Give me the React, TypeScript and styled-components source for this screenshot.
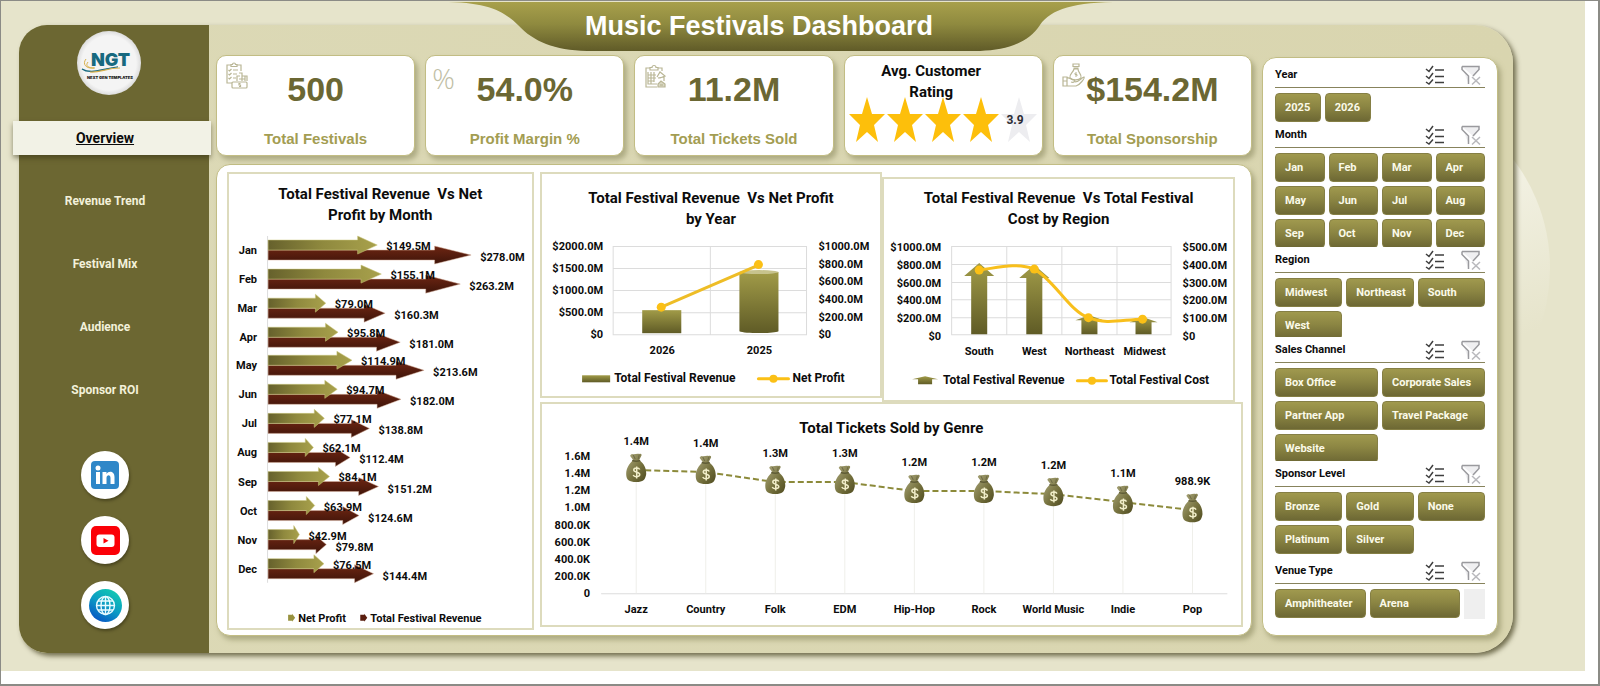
import React from "react";
import styled, { createGlobalStyle, css } from "styled-components";

const GlobalStyle = createGlobalStyle`
  *, *::before, *::after { box-sizing: border-box; }
  body { margin: 0; background: #ffffff; font-family: Roboto, "Liberation Sans", sans-serif; color: #0c0c0c; }
  h1, h2, p, ul { margin: 0; padding: 0; }
  ul { list-style: none; }
  button { font: inherit; }
`;

/* ---------- page frame ---------- */

const Page = styled.div`
  min-height: 100vh;
  border: 2px solid #8b8b86;
  border-width: 1px 2px 2px 1px;
  padding: 0 13px 13px 0;
  display: flex;
`;

const Canvas = styled.div`
  flex: 1;
  min-width: 0;
  position: relative;
  overflow: hidden;
  isolation: isolate;
  padding: 0 72px 18px 18px;
  background: #e6e4cb;
`;

const Glow = styled.div`
  position: absolute;
  z-index: -1;
  top: 88px;
  right: 35px;
  width: 358px;
  height: 358px;
  border-radius: 50%;
  background: linear-gradient(160deg, #f6f5ea 30%, #e6e4cb 75%);
`;

const Header = styled.header`
  position: relative;
  z-index: 1;
  display: flex;
  justify-content: center;
  margin-left: 32px;
`;

const Banner = styled.div`
  position: relative;
  width: 680px;
  height: 50px;
  padding-right: 46px;
  display: flex;
  align-items: center;
  justify-content: center;
  svg { position: absolute; inset: 0; width: 100%; height: 100%; }
`;

const Title = styled.h1`
  position: relative;
  font: 700 27px/50px "Liberation Sans", Arial, sans-serif;
  color: #ffffff;
  white-space: nowrap;
`;

const Board = styled.div`
  margin-top: -26px;
  border-radius: 28px 38px 38px 28px;
  background: linear-gradient(90deg, #dcd9b6, #d9d5af);
  box-shadow: 3px 3px 5px rgba(74, 70, 36, 0.75);
  display: grid;
  grid-template-columns: 190px minmax(0, 1fr) 236px;
  column-gap: 7px;
  padding-right: 15px;
`;

/* ---------- sidebar ---------- */

const Sidebar = styled.aside`
  background: #6c6732;
  border-radius: 28px 0 0 28px;
  padding: 6px 18px 0 0;
  display: flex;
  flex-direction: column;
  align-items: center;
`;

const LogoDisc = styled.div`
  width: 64px;
  height: 64px;
  margin-left: 8px;
  border-radius: 50%;
  background: radial-gradient(circle, #f4f4f4 60%, #dedede 70%);
  svg { display: block; width: 64px; height: 64px; }
`;

const Nav = styled.nav`
  align-self: stretch;
  display: flex;
  flex-direction: column;
  gap: 29px;
  margin-top: 26px;
`;

const NavLink = styled.a<{ $active?: boolean }>`
  height: 34px;
  display: flex;
  align-items: center;
  justify-content: center;
  color: #f3f1da;
  font-size: 12px;
  font-weight: 700;
  text-decoration: none;
  ${(p) =>
    p.$active &&
    css`
      margin: 0 -20px 0 -6px;
      padding-right: 14px;
      background: #f2f2e6;
      color: #0c0c0c;
      font-size: 14px;
      text-decoration: underline;
      box-shadow: 0 3px 5px rgba(50, 46, 18, 0.5);
    `}
`;

const Socials = styled.div`
  display: flex;
  flex-direction: column;
  gap: 17px;
  margin-top: 44px;
`;

const SocialLink = styled.a`
  width: 48px;
  height: 48px;
  border-radius: 50%;
  background: #ffffff;
  box-shadow: 1px 2px 3px rgba(40, 36, 12, 0.5);
  display: flex;
  align-items: center;
  justify-content: center;
`;

/* ---------- figures ---------- */

const Main = styled.main`
  padding: 30px 3px 17px 0;
  display: flex;
  flex-direction: column;
  gap: 8px;
`;

const KpiRow = styled.section`
  display: grid;
  grid-template-columns: repeat(5, minmax(0, 1fr));
  gap: 10px;
`;

const panel = css`
  background: #ffffff;
  border: 1px solid #c2bd84;
  box-shadow: 3px 4px 5px rgba(130, 128, 84, 0.5);
`;

const KpiCard = styled.article`
  ${panel}
  position: relative;
  height: 101px;
  border-radius: 10px;
  display: flex;
  flex-direction: column;
  align-items: center;
`;

const KpiIcon = styled.svg`
  position: absolute;
  left: 8px;
  top: 6px;
  width: 24px;
  height: 28px;
`;

const PercentMark = styled.span`
  position: absolute;
  left: 6px;
  top: 8px;
  font: 300 28px/28px "Open Sans", sans-serif;
  color: #c0bea4;
`;

const KpiValue = styled.p`
  margin-top: 13px;
  font: 700 34px/40px "Liberation Sans", Arial, sans-serif;
  color: #6b6733;
`;

const KpiLabel = styled.p`
  margin-top: 20px;
  font: 700 15px/20px "Liberation Sans", Arial, sans-serif;
  color: #a39d52;
  white-space: nowrap;
`;

const RatingTitle = styled.h2`
  position: relative;
  z-index: 1;
  margin-top: 5px;
  margin-right: 24px;
  width: 110px;
  font-size: 15px;
  line-height: 21px;
  font-weight: 700;
  text-align: center;
`;

const Stars = styled.svg`
  width: 190px;
  height: 48px;
  margin-top: -7px;
  flex: none;
`;

/* ---------- charts ---------- */

const ChartPanel = styled.section`
  ${panel}
  flex: 1;
  border-radius: 14px;
  padding: 7px 8px 5px 10px;
  display: grid;
  grid-template-columns: minmax(0, 306fr) minmax(0, 702fr);
  gap: 6px;
  align-items: start;
`;

const RightCharts = styled.div`
  display: flex;
  flex-direction: column;
`;

const TopCharts = styled.div`
  display: grid;
  grid-template-columns: minmax(0, 342fr) minmax(0, 352fr);
  padding-right: 8px;
  align-items: start;
`;

const ChartCard = styled.figure<{ $top: number; $drop?: number }>`
  margin: ${(p) => p.$drop ?? 0}px 0 0;
  border: 2px solid #dddbbd;
  background: #ffffff;
  padding-top: ${(p) => p.$top}px;
`;

const ChartTitle = styled.figcaption<{ $width?: number }>`
  max-width: ${(p) => (p.$width ? p.$width + "px" : "none")};
  margin: 0 auto;
  font-size: 15px;
  line-height: 21px;
  font-weight: 700;
  text-align: center;
`;

const ChartSvg = styled.svg`
  display: block;
  width: 100%;
  height: auto;
  overflow: visible;
  text {
    font-family: Roboto, "Liberation Sans", sans-serif;
    font-size: 11px;
    font-weight: 700;
    fill: #0c0c0c;
  }
  .key { font-size: 12px; }
  .grid { stroke: #dcdcdc; fill: none; }
`;

/* ---------- filters ---------- */

const Filters = styled.aside`
  ${panel}
  margin: 32px 0 17px;
  border-radius: 14px;
  padding: 4px 12px 12px;
`;

const Slicer = styled.section``;

const SlicerHead = styled.div`
  height: 26px;
  border-bottom: 1px solid #87835c;
  display: flex;
  align-items: center;
  padding-right: 4px;
`;

const SlicerTitle = styled.h2`
  flex: 1;
  font-size: 11px;
  line-height: 24px;
  font-weight: 700;
`;

const IconButton = styled.button`
  border: 0;
  background: none;
  padding: 0;
  margin-left: 16px;
  width: 20px;
  height: 20px;
  svg { display: block; width: 20px; height: 20px; }
`;

const Options = styled.div<{ $cols: number; $height: number; $inset: number }>`
  margin-top: 5px;
  height: ${(p) => p.$height}px;
  padding-right: ${(p) => p.$inset}px;
  overflow: hidden;
  display: grid;
  grid-template-columns: repeat(${(p) => p.$cols}, minmax(0, 1fr));
  grid-auto-rows: 29px;
  gap: 4px;
  position: relative;
`;

const Option = styled.button`
  border: 1px solid #857f45;
  border-radius: 4px;
  background: linear-gradient(180deg, #a0994e 0%, #8c8643 45%, #6d6834 100%);
  color: #fbfae9;
  font-size: 11px;
  font-weight: 700;
  text-align: left;
  padding: 0 0 0 9px;
  white-space: nowrap;
`;

const Thumb = styled.span`
  position: absolute;
  right: 0;
  top: 0;
  width: 21px;
  height: 30px;
  background: #efefef;
`;

/* ---------- data ---------- */

const months: [string, number, number][] = [
  ["Jan", 149.5, 278.0],
  ["Feb", 155.1, 263.2],
  ["Mar", 79.0, 160.3],
  ["Apr", 95.8, 181.0],
  ["May", 114.9, 213.6],
  ["Jun", 94.7, 182.0],
  ["Jul", 77.1, 138.8],
  ["Aug", 62.1, 112.4],
  ["Sep", 84.1, 151.2],
  ["Oct", 63.9, 124.6],
  ["Nov", 42.9, 79.8],
  ["Dec", 76.5, 144.4],
];

const genres: [string, string, number][] = [
  ["Jazz", "1.4M", 31],
  ["Country", "1.4M", 33],
  ["Folk", "1.3M", 43],
  ["EDM", "1.3M", 43],
  ["Hip-Hop", "1.2M", 52],
  ["Rock", "1.2M", 52],
  ["World Music", "1.2M", 55],
  ["Indie", "1.1M", 63],
  ["Pop", "988.9K", 71],
];

const slicers = [
  { title: "Year", cols: 4, height: 29, inset: 15, options: ["2025", "2026"] },
  {
    title: "Month", cols: 4, height: 94, inset: 0,
    options: ["Jan", "Feb", "Mar", "Apr", "May", "Jun", "Jul", "Aug", "Sep", "Oct", "Nov", "Dec"],
  },
  { title: "Region", cols: 3, height: 59, inset: 0, options: ["Midwest", "Northeast", "South", "West"] },
  {
    title: "Sales Channel", cols: 2, height: 93, inset: 0,
    options: ["Box Office", "Corporate Sales", "Partner App", "Travel Package", "Website"],
  },
  { title: "Sponsor Level", cols: 3, height: 66, inset: 0, options: ["Bronze", "Gold", "None", "Platinum", "Silver"] },
  { title: "Venue Type", cols: 2, height: 30, inset: 25, options: ["Amphitheater", "Arena"] },
];

const navItems = ["Overview", "Revenue Trend", "Festival Mix", "Audience", "Sponsor ROI"];

/* ---------- icons ---------- */

const iconLine = { fill: "none", stroke: "#b9b695", strokeWidth: 1.2 };

const FestivalIcon = () => (
  <KpiIcon viewBox="0 0 24 28" {...iconLine} aria-hidden="true">
    <path d="M6 3H2v18h5M12 3h4v6M6 4.500V2.500h1.500a1.500 1.500 0 0 1 3 0H12v2z" />
    <path d="M3.500 8l1 1 2-2M8 8h5M3.500 12l1 1 2-2M8 12h4M3.500 16l1 1 2-2M8 16h3" />
    <path d="M14 11h3v3h5v5M12 19v-5h3M14 17h6M17 14v5M20 14v5" />
    <rect x="7" y="20" width="15" height="6" rx="1" />
    <path d="M15.500 21.500h-1.500v1.500h1.500v1.500h-1.500" />
  </KpiIcon>
);

const TicketIcon = () => (
  <KpiIcon viewBox="0 0 24 28" {...iconLine} aria-hidden="true">
    <path d="M7 6H3v19h11M15 6h4v3M7 8V5.500h2a2 2 0 0 1 4 0h2V8z" />
    <path d="M5 10v12h9M5 13h8M5 16h8M5 19h6M8 10v12M11 10v10" />
    <path d="M14 15l3-5 5 4-5 2M15 16l6-1v4" />
    <path d="M15 25v-3l3-3 4 3v3z" fill="#d9d7c2" />
    <path d="M17 23h3" />
  </KpiIcon>
);

const SponsorIcon = () => (
  <KpiIcon viewBox="0 0 24 28" {...iconLine} aria-hidden="true">
    <path d="M11 2h6v2.500h-6zM11.500 6h5M12 7c-1 4-5 5-4 9 2 2 8 3 11 0 1-4-3-5-3-9z" />
    <path d="M15 11h-2v1.500h2v1.500h-2" strokeWidth="1" />
    <path d="M1 15h4v9H1zM1 19h4M5 16c3-1 4 2 7 2 2 1 0 3-3 2M13 20c4 0 6-4 9-5 1 1-4 8-8 9H5" />
  </KpiIcon>
);

const MultiSelectIcon = () => (
  <svg viewBox="0 0 20 20" fill="none" stroke="#3f3f3f" strokeWidth="1.500" aria-hidden="true">
    <path d="M1 4l3 2.500L8 1M1 11l3 2.500L8 8M1 17l3 2L8 14.500M10 5h9M10 11.500h9M10 17.500h9" />
  </svg>
);

const ClearIcon = () => (
  <svg viewBox="0 0 20 20" fill="none" aria-hidden="true">
    <path d="M1 1.500h17v3L12 11M7.500 19v-8L1 4.500v-3" fill="#efeff1" stroke="#9a9a9e" strokeWidth="1.500" />
    <path d="M11 12l8 7.500M19 12l-8 7.500" stroke="#b9b9bd" strokeWidth="1.500" />
  </svg>
);

const Logo = () => (
  <svg viewBox="0 0 64 64" role="img" aria-label="NGT">
    <g fill="none">
      <path d="M9 28c-4 5 0 10 8 9M11 31c-3 4 0 6 7 6" stroke="#d8b04c" strokeWidth="1" />
      <path d="M5 38c8 6 22-1 36-2-12 1-26 8-36 2z" stroke="#17697f" fill="#17697f" strokeWidth="1.200" />
      <path d="M13 41c10 1 16-4 30-4" stroke="#d8b04c" strokeWidth="1.200" />
    </g>
    <text x="14" y="35" fontFamily="Inter, sans-serif" fontWeight="900" fontSize="18" fill="#17697f">NGT</text>
    <text x="33" y="48" textAnchor="middle" fontFamily="Inter, sans-serif" fontWeight="900" fontSize="4" fill="#222222">
      NEXT GEN TEMPLATES
    </text>
  </svg>
);

const LinkedInIcon = () => (
  <svg width="28" height="28" viewBox="0 0 28 28" aria-hidden="true">
    <rect width="28" height="28" rx="4" fill="#2f87c8" />
    <circle cx="7" cy="7" r="2.500" fill="#fff" />
    <path d="M5 11h4v12H5zM11.500 11h4v2c2-3.500 8-3 8 3v7h-4v-6c0-4-4-3.500-4 0v6h-4z" fill="#fff" />
  </svg>
);

const YouTubeIcon = () => (
  <svg width="29" height="29" viewBox="0 0 29 29" aria-hidden="true">
    <rect width="29" height="29" rx="5" fill="#fb0007" />
    <rect x="5.500" y="8.500" width="18" height="12.500" rx="3" fill="#fff" />
    <path d="M12.500 12v5.500l5-2.750z" fill="#fb0007" />
  </svg>
);

const GlobeIcon = () => (
  <svg width="33" height="33" viewBox="0 0 33 33" aria-hidden="true">
    <defs>
      <linearGradient id="globe" x1="0.800" y1="0" x2="0.200" y2="1">
        <stop offset="0" stopColor="#12cdb0" />
        <stop offset="0.500" stopColor="#0b9bc4" />
        <stop offset="1" stopColor="#0750c4" />
      </linearGradient>
    </defs>
    <circle cx="16.500" cy="16.500" r="16.500" fill="url(#globe)" />
    <g fill="none" stroke="#e8fbff" strokeWidth="1.400">
      <circle cx="16.500" cy="16.500" r="9" />
      <ellipse cx="16.500" cy="16.500" rx="4.500" ry="9" />
      <path d="M16.500 7.500v18M7.500 16.500h18M9 12h15M9 21h15" />
    </g>
  </svg>
);

/* ---------- charts ---------- */

const rightArrow = (y: number, length: number) => {
  const neck = 39 + length * 0.82;
  const tip = 39 + length;
  return `M39 ${y - 5}H${neck}V${y - 9}L${tip} ${y}L${neck} ${y + 9}V${y + 5}H39z`;
};

const upArrow = (x: number, top: number, neck: number, bottom: number, half: number) =>
  `M${x} ${top}L${x + half} ${neck}H${x + 8}V${bottom}H${x - 8}V${neck}H${x - half}z`;

const MonthChart = () => (
  <ChartCard $top={10}>
    <ChartTitle $width={220}>Total Festival Revenue &nbsp;Vs Net Profit by Month</ChartTitle>
    <ChartSvg viewBox="0 0 302 401">
      <defs>
        <linearGradient id="profit">
          <stop offset="0" stopColor="#66612c" />
          <stop offset="0.500" stopColor="#8f893e" />
          <stop offset="1" stopColor="#a8a14c" />
        </linearGradient>
        <linearGradient id="revenue" x1="0" y1="0" x2="0" y2="1">
          <stop offset="0" stopColor="#6e2613" />
          <stop offset="1" stopColor="#3e1409" />
        </linearGradient>
      </defs>
      <path d="M38.500 10v346" className="grid" />
      {months.map(([name, profit, revenue], i) => {
        const y = Math.round(19 + i * 28.87);
        return (
          <g key={name}>
            <path d={rightArrow(y + 10, revenue * 0.729)} fill="url(#revenue)" stroke="#d9b5a0" strokeWidth="0.500" />
            <path d={rightArrow(y, profit * 0.729)} fill="url(#profit)" stroke="#cdc87e" strokeWidth="0.500" />
            <text x="28" y={y + 9} textAnchor="end">{name}</text>
            <text x={48 + profit * 0.729} y={y + 5}>${profit.toFixed(1)}M</text>
            <text x={48 + revenue * 0.729} y={y + 16}>${revenue.toFixed(1)}M</text>
          </g>
        );
      })}
      <path d="M59 388h4v-1l3 4-3 4v-1h-4z" fill="#98923f" />
      <text x="69" y="395">Net Profit</text>
      <path d="M131 388h4v-1l3 4-3 4v-1h-4z" fill="#5a1e0f" />
      <text x="141" y="395">Total Festival Revenue</text>
    </ChartSvg>
  </ChartCard>
);

const oliveFill = (
  <linearGradient id="olive" x1="0" y1="0" x2="0" y2="1">
    <stop offset="0" stopColor="#a19b48" />
    <stop offset="1" stopColor="#5f5b26" />
  </linearGradient>
);

const YearChart = () => (
  <ChartCard $top={14}>
    <ChartTitle $width={256}>Total Festival Revenue &nbsp;Vs Net Profit by&nbsp;Year</ChartTitle>
    <ChartSvg viewBox="0 0 338 166">
      <defs>{oliveFill}</defs>
      <path d="M71 16.500h193v88H71zM71 38.500h193M71 60.500h193M71 82.500h193M168 16.500v88" className="grid" />
      {["$2000.0M", "$1500.0M", "$1000.0M", "$500.0M", "$0"].map((t, i) => (
        <text key={t} x="61" y={20 + i * 22} textAnchor="end">{t}</text>
      ))}
      {["$1000.0M", "$800.0M", "$600.0M", "$400.0M", "$200.0M", "$0"].map((t, i) => (
        <text key={t} x="276" y={20 + i * 17.6}>{t}</text>
      ))}
      <rect x="100" y="80" width="39" height="23" fill="url(#olive)" />
      <path d="M197 42v59c5 2.500 34 2.500 39 0V42z" fill="url(#olive)" />
      <ellipse cx="216.500" cy="42" rx="19.500" ry="2" fill="#c7c38d" />
      <path d="M119 77L216 35" stroke="#eebd26" strokeWidth="3" />
      <circle cx="119" cy="77" r="4.500" fill="#fbc016" />
      <circle cx="216" cy="34.500" r="4.500" fill="#fbc016" />
      <text x="120" y="124" textAnchor="middle">2026</text>
      <text x="217" y="124" textAnchor="middle">2025</text>
      <rect x="40" y="145" width="28" height="7" fill="url(#olive)" />
      <text x="72" y="152" className="key">Total Festival Revenue</text>
      <path d="M216 148.500h30" stroke="#fbc016" strokeWidth="3" strokeLinecap="round" />
      <circle cx="231" cy="148.500" r="4" fill="#fbc016" />
      <text x="250" y="152" className="key">Net Profit</text>
    </ChartSvg>
  </ChartCard>
);

const RegionChart = () => (
  <ChartCard $top={9} $drop={5}>
    <ChartTitle $width={280}>Total Festival Revenue &nbsp;Vs Total Festival Cost by Region</ChartTitle>
    <ChartSvg viewBox="0 0 348 170">
      <path
        d="M67.500 16.500h219v88h-219zM67.500 34.500h219M67.500 52.500h219M67.500 69.500h219M67.500 87.500h219M122.500 16.500v88M177.500 16.500v88M232.500 16.500v88"
        className="grid"
      />
      {["$1000.0M", "$800.0M", "$600.0M", "$400.0M", "$200.0M", "$0"].map((t, i) => (
        <text key={t} x="57" y={21 + i * 17.7} textAnchor="end">{t}</text>
      ))}
      {["$500.0M", "$400.0M", "$300.0M", "$200.0M", "$100.0M", "$0"].map((t, i) => (
        <text key={t} x="298" y={21 + i * 17.7}>{t}</text>
      ))}
      <g fill="url(#olive)">
        <path d={upArrow(95, 33, 46, 104, 15)} />
        <path d={upArrow(150, 35, 48, 104, 15)} />
        <path d={upArrow(205, 85, 90, 104, 14)} />
        <path d={upArrow(259, 87, 92, 104, 14)} />
        <path d="M41 146l13 3h-6v5H34v-5h-6z" />
      </g>
      <path d="M95 40C112 38 132 32 150 39C170 50 185 81 204 87.500C222 95 240 89 258 89" fill="none" stroke="#f8bf1c" strokeWidth="3" />
      {[[95, 40], [150, 39], [204, 87.5], [258, 89]].map(([x, y]) => (
        <circle key={x} cx={x} cy={y} r="4.500" fill="#fbc016" />
      ))}
      {["South", "West", "Northeast", "Midwest"].map((t, i) => (
        <text key={t} x={95 + i * 55} y="125" textAnchor="middle">{t}</text>
      ))}
      <text x="59" y="154" className="key">Total Festival Revenue</text>
      <path d="M193 150.500h29" stroke="#fbc016" strokeWidth="3" strokeLinecap="round" />
      <circle cx="207.500" cy="150.500" r="4" fill="#fbc016" />
      <text x="225" y="154" className="key">Total Festival Cost</text>
    </ChartSvg>
  </ChartCard>
);

const MoneyBag = ({ x, y }: { x: number; y: number }) => (
  <g transform={`translate(${x - 10} ${y - 15})`}>
    <path d="M6 1c2 1 5-1 7 0 2-1 3 1 2 2l-2 4c5 4 7 8 7 14-1 6-3 8-10 8S0 27 0 21c0-6 3-10 7-14L4 3c0-1 1-2 2-2z" fill="url(#bag)" />
    <path d="M6 7.500c3 1 5 1 8 0" stroke="#5f5c36" strokeWidth="1.500" fill="none" />
    <path d="M7 2l2 4M13 2l-1 4" stroke="#6f6c48" strokeWidth="1" />
    <path d="M13.500 16.500c-1-2.500-6-2-6 .500s6 2 6 4.500-5.500 3-6.500.500M10.500 13.500v12" stroke="#f1eec9" strokeWidth="1.500" fill="none" />
  </g>
);

const GenreChart = () => {
  const xAt = (i: number) => 94 + i * 69.4;
  return (
    <ChartCard $top={14}>
      <ChartTitle>Total Tickets Sold by Genre</ChartTitle>
      <ChartSvg viewBox="0 2 698 185">
        <defs>
          <linearGradient id="bag" x1="0" y1="0" x2="1" y2="1">
            <stop offset="0" stopColor="#aeaa80" />
            <stop offset="0.550" stopColor="#77733f" />
            <stop offset="1" stopColor="#4f4b20" />
          </linearGradient>
        </defs>
        {["1.6M", "1.4M", "1.2M", "1.0M", "800.0K", "600.0K", "400.0K", "200.0K", "0"].map((t, i) => (
          <text key={t} x="48" y={23 + i * 17.1} textAnchor="end">{t}</text>
        ))}
        <path d="M59 156.500h625" className="grid" />
        {genres.map(([name, , y], i) => (
          <path key={name} d={`M${xAt(i)} ${y}V156`} stroke="#efefea" />
        ))}
        <polyline
          points={genres.map(([, , y], i) => `${xAt(i)},${y + 2}`).join(" ")}
          fill="none"
          stroke="#8c8a3a"
          strokeWidth="2"
          strokeDasharray="6 3"
        />
        {genres.map(([name, value, y], i) => (
          <g key={name}>
            <MoneyBag x={xAt(i)} y={y} />
            <text x={xAt(i)} y={y - 23} textAnchor="middle">{value}</text>
            <text x={xAt(i)} y="176" textAnchor="middle">{name}</text>
          </g>
        ))}
      </ChartSvg>
    </ChartCard>
  );
};

const starPath = (x: number) =>
  `M${x} 1l5 17h13l-11 11 4 17-11-10-11 10 4-17-11-11h13z`;

const RatingCard = () => (
  <KpiCard>
    <RatingTitle>Avg. Customer Rating</RatingTitle>
    <Stars viewBox="0 0 190 48" role="img" aria-label="3.9 out of 5">
      {[19, 57, 95, 133].map((x) => (
        <path key={x} d={starPath(x)} fill="#fdbf0b" />
      ))}
      <path d={starPath(171)} fill="#ededf0" />
      <text x="167" y="28" textAnchor="middle" fontSize="12" fontWeight="700" fill="#2b2b33">3.9</text>
    </Stars>
  </KpiCard>
);

/* ---------- page ---------- */

export default function App() {
  return (
    <Page>
      <GlobalStyle />
      <Canvas>
        <Glow />
        <Header>
          <Banner>
            <svg viewBox="0 0 680 50" preserveAspectRatio="none" aria-hidden="true">
              <defs>
                <linearGradient id="banner" x1="0" y1="0" x2="0" y2="1">
                  <stop offset="0" stopColor="#a8a04b" />
                  <stop offset="0.450" stopColor="#8f8a3f" />
                  <stop offset="1" stopColor="#605b28" />
                </linearGradient>
              </defs>
              <path d="M0 1C45 1 62 10 76 24C92 41 112 49 145 50H538C565 49 586 42 598 24C609 8 632 1 680 1z" fill="url(#banner)" />
            </svg>
            <Title>Music Festivals Dashboard</Title>
          </Banner>
        </Header>
        <Board>
          <Sidebar>
            <LogoDisc><Logo /></LogoDisc>
            <Nav>
              {navItems.map((item, i) => (
                <NavLink key={item} href="#" $active={i === 0}>{item}</NavLink>
              ))}
            </Nav>
            <Socials>
              <SocialLink href="#" aria-label="LinkedIn"><LinkedInIcon /></SocialLink>
              <SocialLink href="#" aria-label="YouTube"><YouTubeIcon /></SocialLink>
              <SocialLink href="#" aria-label="Website"><GlobeIcon /></SocialLink>
            </Socials>
          </Sidebar>
          <Main>
            <KpiRow>
              <KpiCard>
                <FestivalIcon />
                <KpiValue>500</KpiValue>
                <KpiLabel>Total Festivals</KpiLabel>
              </KpiCard>
              <KpiCard>
                <PercentMark>%</PercentMark>
                <KpiValue>54.0%</KpiValue>
                <KpiLabel>Profit Margin %</KpiLabel>
              </KpiCard>
              <KpiCard>
                <TicketIcon />
                <KpiValue>11.2M</KpiValue>
                <KpiLabel>Total Tickets Sold</KpiLabel>
              </KpiCard>
              <RatingCard />
              <KpiCard>
                <SponsorIcon />
                <KpiValue>$154.2M</KpiValue>
                <KpiLabel>Total Sponsorship</KpiLabel>
              </KpiCard>
            </KpiRow>
            <ChartPanel>
              <MonthChart />
              <RightCharts>
                <TopCharts>
                  <YearChart />
                  <RegionChart />
                </TopCharts>
                <GenreChart />
              </RightCharts>
            </ChartPanel>
          </Main>
          <Filters>
            {slicers.map((s) => (
              <Slicer key={s.title}>
                <SlicerHead>
                  <SlicerTitle>{s.title}</SlicerTitle>
                  <IconButton aria-label={`Select several: ${s.title}`}><MultiSelectIcon /></IconButton>
                  <IconButton aria-label={`Clear filter: ${s.title}`}><ClearIcon /></IconButton>
                </SlicerHead>
                <Options $cols={s.cols} $height={s.height} $inset={s.inset}>
                  {s.options.map((o) => (
                    <Option key={o}>{o}</Option>
                  ))}
                  {s.title === "Venue Type" && <Thumb />}
                </Options>
              </Slicer>
            ))}
          </Filters>
        </Board>
      </Canvas>
    </Page>
  );
}
